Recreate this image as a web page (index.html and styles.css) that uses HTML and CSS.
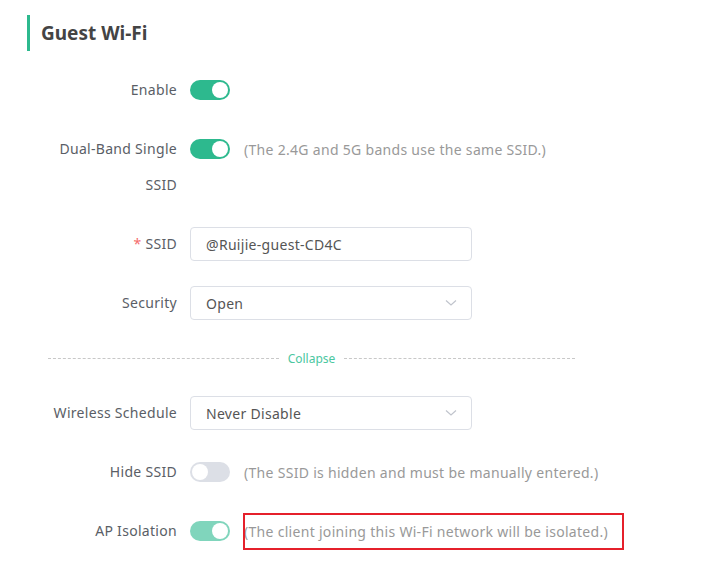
FILE: index.html
```html
<!DOCTYPE html>
<html lang="en">
<head>
    <meta charset="UTF-8">
    <meta name="viewport" content="width=device-width, initial-scale=1.0">
    <title>Guest Wi-Fi</title>
    <link rel="stylesheet" href="styles.css">
</head>
<body>

    <div class="page">
        <h2 class="section-title">Guest Wi-Fi</h2>

        <div class="form">
            <div class="form-item">
                <label class="form-label">Enable</label>
                <div class="form-control">
                    <span class="switch on"></span>
                </div>
            </div>

            <div class="form-item">
                <label class="form-label">Dual-Band Single SSID</label>
                <div class="form-control">
                    <span class="switch on"></span>
                    <span class="hint">(The 2.4G and 5G bands use the same SSID.)</span>
                </div>
            </div>

            <div class="form-item">
                <label class="form-label"><span class="required">*</span> SSID</label>
                <div class="form-control">
                    <input type="text" class="text-input" value="@Ruijie-guest-CD4C">
                </div>
            </div>

            <div class="form-item">
                <label class="form-label">Security</label>
                <div class="form-control">
                    <div class="select">
                        <span>Open</span>
                        <svg class="arrow" width="12" height="8" viewBox="0 0 12 8"><polyline points="1,1.5 6,6 11,1.5" fill="none" stroke="#c0c4cc" stroke-width="1.2"/></svg>
                    </div>
                </div>
            </div>

            <!-- collapse divider -->
            <div class="divider"><span>Collapse</span></div>

            <div class="form-item">
                <label class="form-label">Wireless Schedule</label>
                <div class="form-control">
                    <div class="select">
                        <span>Never Disable</span>
                        <svg class="arrow" width="12" height="8" viewBox="0 0 12 8"><polyline points="1,1.5 6,6 11,1.5" fill="none" stroke="#c0c4cc" stroke-width="1.2"/></svg>
                    </div>
                </div>
            </div>

            <div class="form-item">
                <label class="form-label">Hide SSID</label>
                <div class="form-control">
                    <span class="switch"></span>
                    <span class="hint">(The SSID is hidden and must be manually entered.)</span>
                </div>
            </div>

            <div class="form-item">
                <label class="form-label">AP Isolation</label>
                <div class="form-control">
                    <span class="switch on disabled"></span>
                    <span class="hint marked">(The client joining this Wi-Fi network will be isolated.)</span>
                </div>
            </div>
        </div>
    </div>

</body>
</html>
```

FILE: styles.css
```css
body {
    margin: 0;
    background: #fff;
    font-family: "Noto Sans", "Open Sans", sans-serif;
    font-size: 14px;
    letter-spacing: 0.3px;
    color: #555;
}

.page {
    padding-top: 15px;
}

.section-title {
    margin: 0 0 21px 27px;
    padding-left: 11px;
    border-left: 3px solid #2db98e;
    height: 36px;
    line-height: 36px;
    font-size: 19px;
    font-weight: bold;
    letter-spacing: 0;
    color: #444;
}

.form-item {
    display: flex;
    align-items: flex-start;
    margin-bottom: 23px;
}

.form-label {
    width: 130px;
    margin-left: 47px;
    text-align: right;
    line-height: 36px;
    color: #5a5e66;
}

.required {
    color: #f56c6c;
}

.form-control {
    display: flex;
    align-items: center;
    gap: 14px;
    height: 36px;
    margin-left: 13px;
}

.switch {
    position: relative;
    display: inline-block;
    width: 40px;
    height: 20px;
    border-radius: 10px;
    background: #dcdfe6;
}

.switch::after {
    content: "";
    position: absolute;
    top: 2px;
    left: 2px;
    width: 16px;
    height: 16px;
    border-radius: 50%;
    background: #fff;
}

.switch.on {
    background: #2db98e;
}

.switch.on::after {
    left: 22px;
}

.switch.disabled {
    background: #80d5bc;
}

.hint {
    color: #999;
}

.hint.marked {
    position: relative;
}

.hint.marked::after {
    content: "";
    position: absolute;
    left: -1px;
    right: -16px;
    top: -9px;
    bottom: -9px;
    border: 2px solid #e5202b;
}

.text-input,
.select {
    box-sizing: border-box;
    width: 282px;
    height: 34px;
    border: 1px solid #dcdfe6;
    border-radius: 4px;
    padding: 0 15px;
    font-family: inherit;
    font-size: 14px;
    letter-spacing: 0.3px;
    color: #555;
    background: #fff;
    outline: none;
}

.select {
    display: flex;
    align-items: center;
    justify-content: space-between;
}

.arrow {
    margin-right: -1px;
}

.divider {
    display: flex;
    align-items: center;
    gap: 9px;
    width: 527px;
    height: 28px;
    margin: 0 0 23px 48px;
    font-size: 12px;
    letter-spacing: 0;
    color: #4cc79f;
}

.divider::before,
.divider::after {
    content: "";
    flex: 1;
    border-top: 1px dashed #c8c8c8;
}
```
